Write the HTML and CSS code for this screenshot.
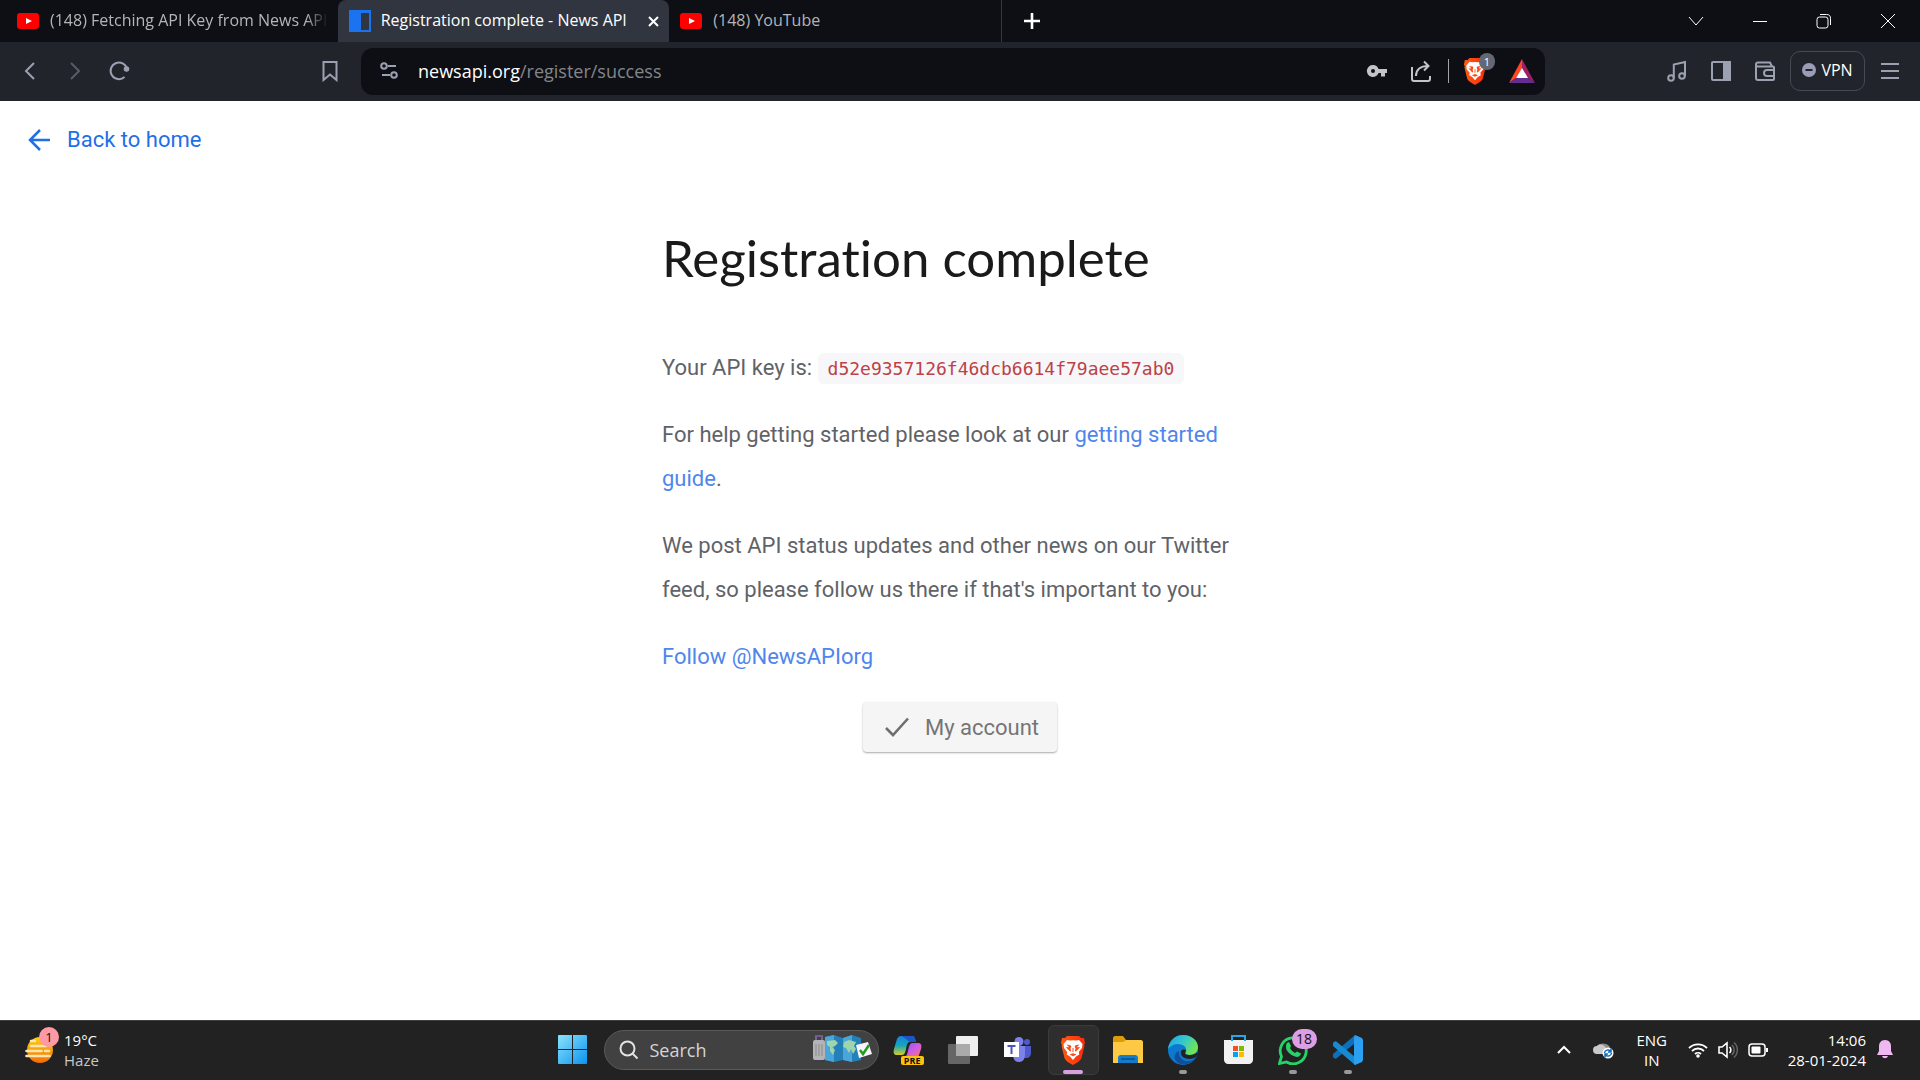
FILE: index.html
```html
<!DOCTYPE html>
<html lang="en">
<head>
<meta charset="utf-8">
<title>Registration complete - News API</title>
<link rel="stylesheet" href="styles.css">
</head>
<body>
<svg class="defs" aria-hidden="true">
  <defs>
    <linearGradient id="win" x1="0" y1="0" x2="1" y2="1"><stop offset="0" stop-color="#8be3fb"/><stop offset="1" stop-color="#0a93f0"/></linearGradient>
    <linearGradient id="lionfill" x1="0" y1="0" x2="1" y2="0"><stop offset="0" stop-color="#ff5a12"/><stop offset="1" stop-color="#fb2a0c"/></linearGradient>
    <symbol id="youtube" viewBox="0 0 22 22"><rect y="3" width="22" height="16" rx="3" fill="#f00"/><path d="M9 8v6l6-3z" fill="#fff"/></symbol>
    <symbol id="lion" viewBox="0 0 26 30">
      <path d="M7 1h12l2 2 3 0 1 5-1 2 .5 1-3 12c-1 3-5 5-8.500 7C9.500 28 5.500 26 4.500 23l-3-12L2 10 1 8l1-5h3z" fill="url(#lionfill)"/>
      <path d="M7 5l3 .6 3-.4 3 .4L19 5l3.500 4-.5 4-3.200 4 .5 2.500-3.300 2L13 25l-3-3.500-3.300-2 .5-2.500L4 13l-.5-4z" fill="#fff"/>
      <path d="M6.500 9.500l4 .7.800 1.300-.8 2 .6 2.500-1 .5L7.500 14l-1.500-2 3 .3-1-1.300zM19.500 9.500l-4 .7-.8 1.300.8 2-.6 2.500 1 .5 2.600-2.500 1.500-2-3 .3 1-1.300zM9.500 19.500l3.500-1.200 3.500 1.200-3.500 1.800zM12.500 13h1v4h-1z" fill="#fb4b16"/>
    </symbol>
  </defs>
</svg>

<header class="browser">
  <div class="tabstrip">
    <nav class="tabs" aria-label="Tabs">
      <a class="tab" href="#"><svg class="favicon"><use href="#youtube"/></svg><span class="tab-title fade">(148) Fetching API Key from News API</span></a>
      <div class="tab active">
        <svg class="favicon" viewBox="0 0 22 22"><path d="M0 0h22v22H0z" fill="#1b73f0"/><path d="M12 3h8v17h-8z" fill="#30353f"/></svg>
        <span class="tab-title">Registration complete - News API</span>
        <button class="tab-close" aria-label="Close tab"><svg width="11" height="11" viewBox="0 0 11 11"><path d="M1 1l9 9M10 1l-9 9" stroke="#fff" stroke-width="2"/></svg></button>
      </div>
      <a class="tab last" href="#"><svg class="favicon"><use href="#youtube"/></svg><span class="tab-title">(148) YouTube</span></a>
    </nav>
    <button class="new-tab" aria-label="New tab"><svg width="18" height="18" viewBox="0 0 18 18"><path d="M9 1v16M1 9h16" stroke="#fff" stroke-width="2.600"/></svg></button>
    <div class="window-controls">
      <button aria-label="Search tabs"><svg width="16" height="16" viewBox="0 0 16 16"><path d="M1 4l7 8 7-8"/></svg></button>
      <button aria-label="Minimize"><svg width="16" height="16" viewBox="0 0 16 16"><path d="M1 8.500h14"/></svg></button>
      <button aria-label="Restore"><svg width="16" height="16" viewBox="0 0 16 16"><rect x="1" y="4" width="11" height="11" rx="2.500"/><path d="M4 1.500h6.500c3 0 4 1.500 4 4V12"/></svg></button>
      <button aria-label="Close"><svg width="16" height="16" viewBox="0 0 16 16"><path d="M1 1l14 14M15 1L1 15"/></svg></button>
    </div>
  </div>

  <div class="toolbar">
    <div class="nav-buttons">
      <button aria-label="Back"><svg width="22" height="22" viewBox="0 0 22 22"><path d="M14 3l-8 8 8 8"/></svg></button>
      <button class="dim" aria-label="Forward"><svg width="22" height="22" viewBox="0 0 22 22"><path d="M7 3l8 8-8 8"/></svg></button>
      <button aria-label="Reload"><svg width="22" height="22" viewBox="0 0 22 22"><path d="M16.500 17A8.300 8.300 0 1 1 19 9"/><circle cx="18.500" cy="9" r="1.800" fill="#9ba1b1"/></svg></button>
      <button class="bookmark" aria-label="Bookmark"><svg width="22" height="22" viewBox="0 0 22 22"><path d="M4.500 2h13v18L11 14.500 4.500 20z"/></svg></button>
    </div>
    <div class="address">
      <svg class="site-icon" width="20" height="20" viewBox="0 0 20 20"><circle cx="5" cy="5" r="2.800"/><path d="M9 5h8M3 14h8"/><circle cx="15" cy="14" r="2.800"/></svg>
      <a class="url" href="#">newsapi.org<span>/register/success</span></a>
      <div class="address-actions">
        <button aria-label="Passwords"><svg width="22" height="22" viewBox="0 0 22 22"><path d="M7 5a6 6 0 1 0 5.500 8H15v3.500h4V13h2V9h-8.500A6 6 0 0 0 7 5zm0 4a2 2 0 1 1 0 4 2 2 0 0 1 0-4z" fill="#c3c4c7" fill-rule="evenodd" stroke="none"/></svg></button>
        <button aria-label="Share"><svg width="22" height="22" viewBox="0 0 22 22"><path d="M2 7v12a2 2 0 0 0 2 2h14a2 2 0 0 0 2-2v-3M6 16c0-6 4-10 12-10M14 1.500L18.500 6 14 10.500"/></svg></button>
        <span class="separator"></span>
        <button class="shield" aria-label="Shields"><svg width="24" height="28"><use href="#lion"/></svg><span class="shield-count">1</span></button>
        <button class="rewards" aria-label="Rewards"><svg width="26" height="24" viewBox="0 0 26 24"><path d="M13 0L0 24l7-5 6-9z" fill="#ff4724"/><path d="M13 0l13 24-7-5-6-9z" fill="#9e1f63"/><path d="M0 24h26l-7-5H7z" fill="#662d91"/><path d="M13 9l6 10H7z" fill="#fff"/></svg></button>
      </div>
    </div>
    <div class="tools">
      <button aria-label="Playlist"><svg width="22" height="22" viewBox="0 0 22 22"><circle cx="5" cy="18" r="2.800"/><circle cx="16" cy="16" r="2.800"/><path d="M7.800 18V4.500L19 2v14"/></svg></button>
      <button aria-label="Sidebar"><svg width="22" height="22" viewBox="0 0 22 22"><rect x="2" y="2" width="18" height="18" rx="1"/><path d="M14 2h6v18h-6z" fill="#9ba1b1"/></svg></button>
      <button aria-label="Wallet"><svg width="22" height="22" viewBox="0 0 22 22"><path d="M2 4.500C2 3 3 2.500 4 2.500h12l2 4M2 4.500c0 1.500 1 2 2 2h15a1 1 0 0 1 1 1V19a1 1 0 0 1-1 1H4a2 2 0 0 1-2-2zM20 10h-7a3 3 0 0 0 0 6h7"/></svg></button>
      <button class="vpn"><svg width="14" height="14" viewBox="0 0 14 14"><circle cx="7" cy="7" r="7" fill="#9a9db5" stroke="none"/><path d="M3.500 7h7" stroke="#21242b" stroke-width="2"/></svg>VPN</button>
      <button aria-label="Menu"><svg width="22" height="22" viewBox="0 0 22 22"><path d="M2 4h18M2 11h18M2 18h18"/></svg></button>
    </div>
  </div>
</header>

<main class="page">
  <a class="back" href="#"><svg width="24" height="24" viewBox="0 0 24 24"><path d="M22 12H2M12 2L2 12l10 10" fill="none" stroke="#1f6fe8" stroke-width="2.500"/></svg>Back to home</a>
  <article class="content">
    <h1>Registration complete</h1>
    <p>Your API key is: <code>d52e9357126f46dcb6614f79aee57ab0</code></p>
    <p>For help getting started please look at our <a href="#">getting started guide</a>.</p>
    <p>We post API status updates and other news on our Twitter feed, so please follow us there if that's important to you:</p>
    <p><a href="#">Follow @NewsAPIorg</a></p>
    <button class="account"><svg width="26" height="22" viewBox="0 0 26 22"><path d="M2 12l7 7L24 2.500" fill="none" stroke="#6f6f6f" stroke-width="2.600"/></svg>My account</button>
  </article>
</main>

<footer class="taskbar">
  <button class="weather">
    <span class="weather-icon">
      <svg width="30" height="28" viewBox="0 0 30 28"><defs><linearGradient id="sun" x1="0" y1="0" x2="0" y2="1"><stop offset="0" stop-color="#ffcf10"/><stop offset="1" stop-color="#f36d0a"/></linearGradient></defs><circle cx="15" cy="14" r="13" fill="url(#sun)"/><path d="M6 5h4M6 10h15M1.500 15h15M20 15h4M1.500 20h23" stroke="#ffe6ae" stroke-width="2.600" stroke-linecap="round"/></svg>
      <span class="weather-badge">1</span>
    </span>
    <span class="weather-text">19°C<span>Haze</span></span>
  </button>

  <div class="apps">
    <button class="app" aria-label="Start"><svg width="29" height="29" viewBox="0 0 29 29"><path d="M1 0h13v14H0V1a1 1 0 0 1 1-1zM15 0h13a1 1 0 0 1 1 1v13H15zM0 15h14v14H1a1 1 0 0 1-1-1zM15 15h14v13a1 1 0 0 1-1 1H15z" fill="url(#win)"/></svg></button>
    <label class="search">
      <svg width="20" height="20" viewBox="0 0 20 20" fill="none" stroke="#e2e2e2" stroke-width="2"><circle cx="8.500" cy="8.500" r="7"/><path d="M13.500 13.500l5 5"/></svg>
      <input type="text" placeholder="Search" aria-label="Search">
      <svg width="60" height="29" viewBox="0 0 60 29">
        <path d="M13 2l9-2 9 3 9-3 9 3v22l-9 2-9-2-9 2-9-2z" fill="#2480b8"/><path d="M13 2l9-2v27l-9-2zM31 3l9-3v27l-9-2z" fill="#4aa5d8"/>
        <path d="M15 6l8-1 3 3-3 3-3 1 3 3-2 5-3-4v-4l-3-2zM32 7l5-2 7 2-2 4 2 3-3 5-2-5-2 4-3-5-3-1z" fill="#9ed5ac"/>
        <path d="M4 9V1h6v8" fill="none" stroke="#837a92" stroke-width="1.500"/><path d="M4 0h6v2H4z" fill="#7854a6"/><rect x="1" y="5" width="12" height="20" rx="2" fill="#b4b3b6"/><path d="M4 9v12M7 9v12M10 9v12" stroke="#8c8c8c"/><path d="M3 25h3v2H3zM9 25h3v2H9z" fill="#44355d"/>
        <path d="M44 10l12-3 4 12-13 4z" fill="#f7f4ff"/><path d="M48 15l3 4 6-9" fill="none" stroke="#239b1f" stroke-width="2.500"/>
      </svg>
    </label>
    <button class="app" aria-label="Copilot"><svg width="30" height="29" viewBox="0 0 30 29"><defs><linearGradient id="cpa" x1="0" y1="0" x2="0" y2="1"><stop offset="0" stop-color="#1684dd"/><stop offset=".5" stop-color="#17a5bd"/><stop offset="1" stop-color="#d5ce20"/></linearGradient><linearGradient id="cpb" x1="0" y1="0" x2="1" y2="1"><stop offset="0" stop-color="#7a55f4"/><stop offset=".5" stop-color="#cf5ce4"/><stop offset="1" stop-color="#ff7865"/></linearGradient></defs><path d="M8 1h11c3 0 3 3 4 6h-6c-3 0-3 3-4 7-1 5-2 6-5 6H4c-3 0-4-2-3-6L4 4c1-2 2-3 4-3z" fill="url(#cpa)"/><path d="M8 1h11c3 0 3 3 4 6h-6c-2-1-4-4-9-6z" fill="#1b55c8"/><path d="M19 8h6c3 0 4 2 3 6l-3 9H10c3-1 4-3 5-7 1-5 2-8 4-8z" fill="url(#cpb)"/></svg><span class="pre">PRE</span></button>
    <button class="app" aria-label="Task view"><svg width="30" height="28" viewBox="0 0 30 28"><rect x="8" width="22" height="20" rx="1" fill="#efefef"/><rect y="8" width="22" height="20" rx="1" fill="#666"/><path d="M8 8h14v12H8z" fill="#aaa"/></svg></button>
    <button class="app" aria-label="Teams"><svg width="28" height="25" viewBox="0 0 28 25"><circle cx="23" cy="5" r="3" fill="#5059c9"/><path d="M18 9h9v7c0 3-2 5-5 5h-4z" fill="#5059c9"/><circle cx="15" cy="4.500" r="4.500" fill="#7b83eb"/><path d="M9 9h12v8c0 5-2 8-6 8s-6-3-6-8z" fill="#7b83eb"/><path d="M0 5h15v15H0z" fill="#fff"/><path d="M3.500 9h8M7.500 9v8" stroke="#4b53bc" stroke-width="2"/></svg></button>
    <button class="app current" aria-label="Brave"><svg width="26" height="30"><use href="#lion"/></svg></button>
    <button class="app" aria-label="File Explorer"><svg width="30" height="27" viewBox="0 0 30 27"><path d="M0 2c0-1 1-2 2-2h8l3 4h15v7H0z" fill="#dc9b08"/><path d="M0 6h10l3-2h15c1 0 2 1 2 2v21H0z" fill="#fdc843"/><path d="M5 27v-5c0-2 1-3 3-3h14c2 0 3 1 3 3v5z" fill="#147cc8"/><path d="M8 23h14" stroke="#0b508d" stroke-width="1.500"/></svg></button>
    <button class="app open" aria-label="Edge"><svg width="30" height="30" viewBox="0 0 30 30"><defs><linearGradient id="ea" x1="0" y1="0" x2="1" y2=".5"><stop offset="0" stop-color="#229de2"/><stop offset=".5" stop-color="#31c6d4"/><stop offset="1" stop-color="#70e554"/></linearGradient></defs><circle cx="15" cy="15" r="15" fill="#0d79ce"/><path d="M0 14C1 6 7 0 15 0c9 0 15 6 15 12 0 5-4 8-8 8-4 0-6-1-4-4C20 10 7 5 0 14z" fill="url(#ea)"/><path d="M11 16c-1 6 4 11 10 10 3 0 6-2 7-4-5 8-15 10-20 4-3-4-1-9 3-10z" fill="#104f9e"/><path d="M18 16c-2 3 0 4 4 4 3 0 5-1 8-3 0 1-1 3-2 5-5 4-17 2-15-6 1-2 5-2 5 0z" fill="#222"/></svg></button>
    <button class="app" aria-label="Microsoft Store"><svg width="29" height="29" viewBox="0 0 29 29"><path d="M0 5h29v20c0 2-2 4-4 4H4c-2 0-4-2-4-4z" fill="#f2f2f2"/><path d="M8 6V1h13v5" fill="none" stroke="#24a8e8" stroke-width="2"/><path d="M9 11h5v5H9z" fill="#f25022"/><path d="M15 11h5v5h-5z" fill="#7fba00"/><path d="M9 17h5v5H9z" fill="#00a4ef"/><path d="M15 17h5v5h-5z" fill="#ffb900"/></svg></button>
    <button class="app open" aria-label="WhatsApp"><svg width="30" height="30" viewBox="0 0 30 30"><path d="M1.500 28.500l2-7A13 13 0 1 1 8.500 27z" fill="none" stroke="#25d366" stroke-width="2.800"/><path d="M9 8l2-1 2 4-1 2c1 2 3 4 5 5l2-1.500 4 2c-1 3-3 4-6 3-5-1.500-9-6-9-9 0-2 0-3 1-4.500z" fill="#25d366"/></svg><span class="app-badge">18</span></button>
    <button class="app open" aria-label="Visual Studio Code"><svg width="30" height="30" viewBox="0 0 30 30"><path d="M22 0v8L4 23c-1 1-2 1-3 0l-1-1c-1-1-1-2 0-3z" fill="#0d70ba"/><path d="M22 30v-8L4 7C3 6 2 6 1 7L0 8c-1 1-1 2 0 3z" fill="#178ad2"/><path d="M22 0l7 3 1 2v20l-1 2-7 3c-1-1-1-1-1-3V3z" fill="#2ba0f0"/></svg></button>
  </div>

  <div class="tray">
    <button aria-label="Hidden icons"><svg width="14" height="14" viewBox="0 0 14 14"><path d="M1 10l6-6 6 6" stroke-width="2"/></svg></button>
    <button aria-label="OneDrive" class="cloud"><svg width="21" height="18" viewBox="0 0 21 18"><path d="M4 5a7 5 0 0 1 13 2v3H8z" fill="#8d8d8d" stroke="none"/><path d="M4 13a4 4 0 0 1 0-8c3-3 7-1 9 2l2 6z" fill="#c9c9c9" stroke="none"/><circle cx="15" cy="12" r="5.500" fill="#fff" stroke="none"/><path d="M11.500 12a3.500 3.500 0 0 1 6-2M18.500 12a3.500 3.500 0 0 1-6 2M18 7.500V11h-3M12 16.500V13h3" stroke="#0f6cbd"/></svg></button>
    <button class="language">ENG<br>IN</button>
    <button class="status" aria-label="Network, volume, battery">
      <svg width="20" height="16" viewBox="0 0 20 16"><path d="M1 6a13 13 0 0 1 18 0M4 9a8.500 8.500 0 0 1 12 0M7 12a4.300 4.300 0 0 1 6 0" stroke-width="1.800"/><circle cx="10" cy="14" r="1.800" fill="#fff" stroke="none"/></svg>
      <svg width="20" height="18" viewBox="0 0 20 18"><path d="M1 6h3l5-4v14l-5-4H1zM11.500 6a4 4 0 0 1 0 6" stroke-width="1.600"/><path d="M14 4a7 7 0 0 1 0 10M16 1.500a10 10 0 0 1 0 15" stroke="#666"/></svg>
      <svg width="20" height="14" viewBox="0 0 20 14"><rect x="1" y="1" width="16" height="12" rx="3"/><rect x="3.500" y="3.500" width="9" height="7" rx="1" fill="#fff" stroke="none"/><path d="M19 5v4" stroke-width="2"/></svg>
    </button>
    <button class="clock">14:06<br>28-01-2024</button>
    <button aria-label="Notifications"><svg width="16" height="19" viewBox="0 0 16 19"><path d="M8 0c4 0 6 3 6 6v5l2 4H0l2-4V6c0-3 2-6 6-6zM5 16h6c-1 3-5 3-6 0z" fill="#efb8f0" stroke="none"/></svg></button>
  </div>
</footer>
</body>
</html>
```
FILE: styles.css
```css
* { box-sizing: border-box; }

body {
  margin: 0;
  min-height: 100vh;
  display: flex;
  flex-direction: column;
  background: #fff;
  color: #5f6368;
  font-family: Roboto, sans-serif;
  font-size: 22px;
}

button {
  margin: 0;
  padding: 0;
  border: 0;
  background: none;
  color: inherit;
  font: inherit;
  cursor: pointer;
}

a { text-decoration: none; }
svg { display: block; flex: none; }
.defs { position: absolute; width: 0; height: 0; }

/* Browser chrome */
.browser { font-family: "Open Sans", "Noto Sans", sans-serif; }

.tabstrip {
  display: flex;
  height: 42px;
  padding-left: 6px;
  background: #0d0f14;
}

.tabs { display: flex; flex: 0 1 996px; min-width: 0; }

.tab {
  display: flex;
  align-items: center;
  flex: 1 1 0;
  min-width: 0;
  gap: 11px;
  padding: 0 10px 0 11px;
  color: #b4b5b8;
  font-size: 16px;
}

.tab.active {
  background: #30353f;
  border-radius: 8px 8px 0 0;
  color: #fff;
}

.tab.last { border-right: 1px solid #35373c; }
.favicon { width: 22px; height: 22px; }

.tab-title {
  flex: 1;
  min-width: 0;
  overflow: hidden;
  padding-bottom: 2px;
  white-space: nowrap;
}

.fade {
  mask-image: linear-gradient(to right, #000 92%, transparent);
}

.active { gap: 10px; }
.tab-close { padding: 0; }
.new-tab { padding: 0 21px; }
.window-controls { display: flex; margin-left: auto; }

.window-controls button {
  display: grid;
  place-items: center;
  width: 64px;
}

.window-controls svg,
.toolbar svg {
  fill: none;
  stroke: #9ba1b1;
  stroke-width: 2;
}

.window-controls svg { stroke: #fff; stroke-width: 1; }

.toolbar {
  display: flex;
  align-items: center;
  height: 59px;
  padding-bottom: 1px;
  background: #21242b;
}

.nav-buttons {
  display: flex;
  align-items: center;
  flex: 0 0 361px;
  gap: 22px;
  padding: 0 20px;
}

.nav-buttons .dim { opacity: .45; }
.nav-buttons .bookmark { margin-left: auto; }

.address {
  display: flex;
  align-items: center;
  flex: 1;
  min-width: 0;
  height: 47px;
  gap: 19px;
  padding: 0 10px 0 18px;
  border-radius: 12px;
  background: #0d0f14;
}

.url {
  flex: 1;
  color: #fff;
  font-size: 18px;
}

.url span { color: #84868a; }
.address-actions { display: flex; align-items: center; gap: 22px; }
.address-actions svg, .site-icon { stroke: #c3c4c7; }
.toolbar .shield svg, .toolbar .rewards svg { stroke: none; }

.separator {
  width: 1px;
  height: 24px;
  margin-left: -6px;
  background: #a3a4a8;
}

.shield { position: relative; margin-left: -8px; }

.shield-count {
  position: absolute;
  top: -4px;
  right: -8px;
  width: 16px;
  border-radius: 8px;
  background: #646876;
  color: #fff;
  font-size: 11px;
  line-height: 17px;
}

.tools {
  display: flex;
  align-items: center;
  justify-content: flex-end;
  flex: 0 0 375px;
  gap: 22px;
  padding-right: 19px;
}

.vpn {
  display: flex;
  align-items: center;
  justify-content: center;
  width: 75px;
  height: 40px;
  gap: 5px;
  margin: 0 -8px;
  padding-bottom: 2px;
  border: 1px solid #454a55;
  border-radius: 10px;
  color: #fff;
  font-size: 16px;
}

/* Page */
.page { flex: 1; padding: 17px 28px; }

.back {
  display: inline-flex;
  align-items: center;
  gap: 15px;
  color: #1f6fe8;
  line-height: 44px;
}

.content {
  display: flex;
  flex-direction: column;
  max-width: 596px;
  margin: 60px auto 0;
}

h1 {
  margin: 0 0 52px;
  color: #1a1a1a;
  font-family: Lato, sans-serif;
  font-size: 51px;
  font-variant-ligatures: none;
  font-weight: 400;
  line-height: 72px;
}

.content p { margin: 0 0 23px; line-height: 44px; }
.content a { color: #4f86ec; }

code {
  padding: 5px 10px;
  border-radius: 6px;
  background: #f7f7f9;
  color: #bd4147;
  font-family: "DejaVu Sans Mono", monospace;
  font-size: 18px;
  line-height: 20px;
}

.account {
  display: flex;
  align-items: center;
  align-self: center;
  height: 50px;
  gap: 15px;
  padding: 0 18px 0 21px;
  border-radius: 4px;
  background: #f5f5f5;
  box-shadow: 0 1px 2px #aaa;
  color: #757575;
}

/* Taskbar */
.taskbar {
  display: grid;
  grid-template-columns: 1fr auto 1fr;
  align-items: center;
  height: 60px;
  padding-bottom: 2px;
  border-top: 1px solid #3c3e3f;
  background: #222;
  color: #fff;
  font-family: "Open Sans", "Noto Sans", sans-serif;
  font-size: 15px;
  line-height: 20px;
}

.weather {
  display: flex;
  align-items: center;
  justify-self: start;
  gap: 9px;
  padding-left: 25px;
  text-align: left;
}

.weather-icon { position: relative; }

.weather-badge {
  position: absolute;
  top: -9px;
  right: -4px;
  width: 20px;
  border-radius: 10px;
  background: #ff99a4;
  color: #111;
  font-size: 13px;
  text-align: center;
}

.weather-text span { display: block; color: #c8c8c8; }
.apps { display: flex; align-items: center; }

.app {
  position: relative;
  display: grid;
  place-items: center;
  width: 55px;
  height: 50px;
}

.current::before {
  content: "";
  position: absolute;
  inset: 0 2px;
  border: 1px solid #3b3b3b;
  border-radius: 6px;
  background: #2e2e2e;
}

.current svg { position: relative; }

.open::after,
.current::after {
  content: "";
  position: absolute;
  bottom: 1px;
  width: 8px;
  height: 4px;
  border-radius: 2px;
  background: #999;
}

.current::after { width: 20px; background: #d8a0df; }

.app-badge {
  position: absolute;
  top: 4px;
  right: 4px;
  width: 25px;
  border-radius: 10px;
  background: #dc9ee4;
  color: #111;
  font-size: 14px;
}

.pre {
  position: absolute;
  right: 12px;
  bottom: 10px;
  padding: 0 3px;
  border-radius: 2px;
  background: #fdc20c;
  color: #111;
  font-size: 9px;
  font-weight: 700;
  line-height: 9px;
}

.search {
  display: flex;
  align-items: center;
  width: 275px;
  height: 40px;
  margin: 0 2px 0 4px;
  gap: 11px;
  padding: 0 6px 0 14px;
  border: 1px solid #5a5a5a;
  border-radius: 20px;
  background: #414141;
}

.search input {
  flex: 1;
  min-width: 0;
  padding: 0;
  border: 0;
  outline: 0;
  background: none;
  color: #fff;
  font: inherit;
  font-size: 18px;
}

.search input::placeholder { color: #d4d4d4; opacity: 1; }

.tray {
  display: flex;
  align-items: center;
  justify-self: end;
  padding-right: 27px;
}

.tray svg { fill: none; stroke: #fff; stroke-width: 1.500; }
.cloud { margin: 0 22px; }
.language { width: 32px; }
.status { display: flex; align-items: center; gap: 10px; margin: 0 20px; }
.clock { margin-right: 11px; text-align: right; }
```
